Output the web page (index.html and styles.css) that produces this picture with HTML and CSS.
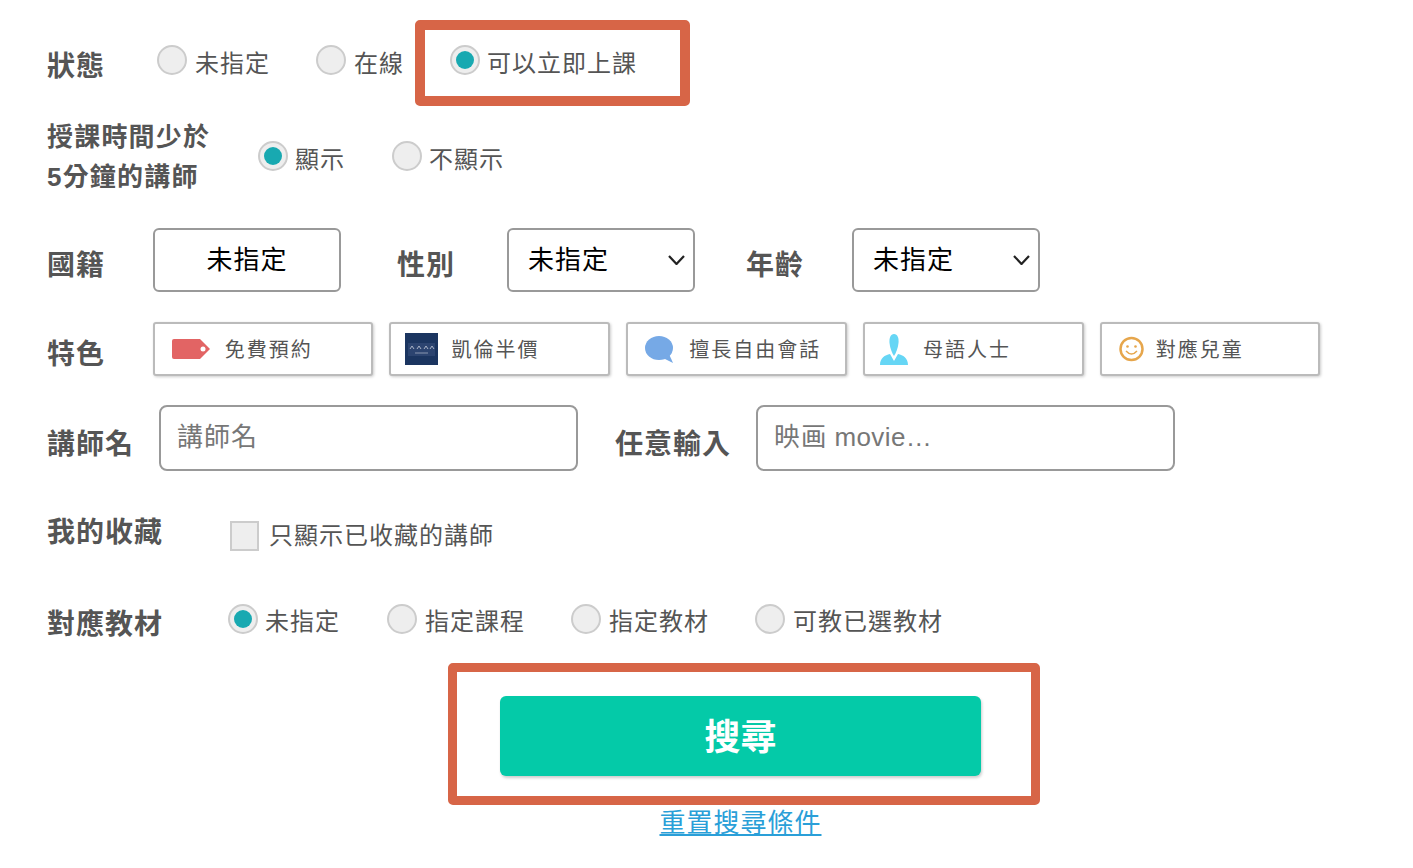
FILE: index.html
```html
<!DOCTYPE html>
<html lang="zh-Hant">
<head>
<meta charset="utf-8">
<title>搜尋</title>
<link rel="stylesheet" href="styles.css">
</head>
<body>
<form class="form">
  <div class="row row-status">
    <span class="label label-status">狀態</span>
    <div class="options">
      <span class="radio-item status-a"><i class="radio"></i>未指定</span>
      <span class="radio-item status-b"><i class="radio"></i>在線</span>
      <span class="highlight-top"><span class="radio-item"><i class="radio on"></i>可以立即上課</span></span>
    </div>
  </div>
  <div class="row row-short">
    <span class="label-small">授課時間少於<br>5分鐘的講師</span>
    <span class="radio-item short-a"><i class="radio on"></i>顯示</span>
    <span class="radio-item short-b"><i class="radio"></i>不顯示</span>
  </div>
  <div class="row row-select">
    <span class="label w-106">國籍</span>
    <div class="pick pick-center">未指定</div>
    <span class="label w-gender">性別</span>
    <div class="select-wrap">
      <select class="pick pick-select"><option>未指定</option></select>
      <svg class="chev" width="17" height="10" viewBox="0 0 17 10"><path d="M1 1L8.500 9 16 1" fill="none" stroke="#222" stroke-width="2.200"/></svg>
    </div>
    <span class="label w-age">年齡</span>
    <div class="select-wrap">
      <select class="pick pick-select"><option>未指定</option></select>
      <svg class="chev" width="17" height="10" viewBox="0 0 17 10"><path d="M1 1L8.500 9 16 1" fill="none" stroke="#222" stroke-width="2.200"/></svg>
    </div>
  </div>
  <div class="row row-feature">
    <span class="label w-feature">特色</span>
    <div class="chips">
      <div class="chip"><svg class="icon ic-tag" width="38" height="20" viewBox="0 0 38 20"><path d="M2 0H28L38 10 28 20H2Q0 20 0 18V2Q0 0 2 0Z" fill="#e26464"/><circle cx="31" cy="10" r="2.500" fill="#fff"/></svg>免費預約</div>
      <div class="chip"><svg class="icon ic-logo" width="33" height="32" viewBox="0 0 33 32"><rect width="33" height="32" fill="#1b3560"/><rect x="3" y="10" width="27" height="13" fill="#2c4470"/><path d="M5 16l2-3 2 3M12 16l2-3 2 3M19 16l2-3 2 3M25 16l2-3 2 3" stroke="#aab4c8" fill="none"/><path d="M10 20H23" stroke="#8a97b0"/></svg>凱倫半價</div>
      <div class="chip"><svg class="icon ic-bubble" width="29" height="27" viewBox="0 0 29 27"><ellipse cx="14" cy="12" rx="14" ry="12" fill="#76a9e6"/><path d="M18 22L28 27 24 18Z" fill="#76a9e6"/></svg>擅長自由會話</div>
      <div class="chip"><svg class="icon ic-person" width="28" height="31" viewBox="0 0 28 31"><path d="M14 0C17.500 0 19 4 18.500 9 18 14 16 19 14 22 12 19 10 14 9.500 9 9 4 10.500 0 14 0Z" fill="#66d6f5"/><path d="M10 20L14 27 18 20C23 21 28 24 28 31H0C0 24 5 21 10 20Z" fill="#66d6f5"/></svg>母語人士</div>
      <div class="chip"><svg class="icon ic-smile" width="25" height="26" viewBox="0 0 25 26"><circle cx="12.500" cy="13" r="11" fill="#fff" stroke="#e6a64c" stroke-width="2.500"/><circle cx="8.500" cy="10.500" r="1.300" fill="#e6a64c"/><circle cx="16.500" cy="10.500" r="1.300" fill="#e6a64c"/><path d="M7 15Q12.500 21 18 15" stroke="#e6a64c" stroke-width="1.500" fill="none"/></svg>對應兒童</div>
    </div>
  </div>
  <div class="row row-input">
    <span class="label w-112">講師名</span>
    <input class="text" placeholder="講師名">
    <span class="label w-input">任意輸入</span>
    <input class="text text-any" placeholder="映画 movie…">
  </div>
  <div class="row row-fav">
    <span class="label w-183">我的收藏</span>
    <span class="radio-item"><i class="check"></i>只顯示已收藏的講師</span>
  </div>
  <div class="row row-material">
    <span class="label w-181">對應教材</span>
    <span class="radio-item mat-a"><i class="radio on"></i>未指定</span>
    <span class="radio-item mat-b"><i class="radio"></i>指定課程</span>
    <span class="radio-item mat-b"><i class="radio"></i>指定教材</span>
    <span class="radio-item"><i class="radio"></i>可教已選教材</span>
  </div>
  <div class="submit-wrap">
    <div class="highlight-bottom"><button type="button" class="submit">搜尋</button></div>
    <a class="reset" href="#">重置搜尋條件</a>
  </div>
</form>
</body>
</html>
```
FILE: styles.css
```css
* { box-sizing: border-box; }
html, body { margin: 0; background: #fff; }
body {
  font-family: "Liberation Sans", "Noto Sans CJK TC", sans-serif;
  color: #555;
  width: 1413px;
  height: 868px;
  overflow: hidden;
}
.form { padding: 20px 0 0 47px; }
.row { display: flex; align-items: center; }
.label { font-size: 28px; font-weight: 700; letter-spacing: 1px; color: #555; white-space: nowrap; position: relative; }
.label-small { font-size: 26px; font-weight: 700; letter-spacing: 1.200px; line-height: 40px; width: 211px; position: relative; top: -3px; }
.radio-item { display: inline-flex; align-items: center; font-size: 24px; letter-spacing: 1px; line-height: 30px; white-space: nowrap; color: #555; }
.radio { width: 30px; height: 30px; border-radius: 50%; background: #eee; border: 2px solid #ccc; margin-right: 8px; position: relative; top: -3px; flex: none; }
.radio.on { margin-right: 7px; }
.radio.on::after { content: ""; position: absolute; left: 4px; top: 4px; width: 18px; height: 18px; border-radius: 50%; background: #18a9b1; }
.check { width: 29px; height: 30px; background: #eee; border: 2px solid #ccc; margin-right: 10px; flex: none; }

.row-status { height: 86px; }
.row-status .radio-item { position: relative; top: 1px; }
.row-status .radio { top: -4px; }
.label-status { width: 110px; top: 1px; }
.options { display: flex; align-items: center; }
.status-a { width: 159px; }
.status-b { width: 99px; }
.highlight-top { width: 275px; height: 86px; border: 10px solid #d76547; border-radius: 5px; display: flex; align-items: center; padding-left: 25px; }

.row-short { height: 80px; margin-top: 14px; }
.row-short .radio { top: -4px; }
.short-a { width: 134px; }
.short-b .radio { margin-right: 7px; }

.row-select { margin-top: 28px; height: 64px; }
.w-106 { width: 106px; top: 3px; }
.w-feature { width: 105.700px; top: 3px; }
.w-gender { width: 110px; margin-left: 56px; top: 3px; }
.w-age { width: 106px; margin-left: 51px; top: 3px; }
.pick {
  width: 188px; height: 64px; border: 2px solid #999; border-radius: 6px; background: #fff;
  font: 26px "Liberation Sans", "Noto Sans CJK TC", sans-serif; color: #000; letter-spacing: 1px;
}
.pick-center { display: flex; align-items: center; justify-content: center; padding: 0 0 6px; }
.select-wrap { position: relative; width: 188px; height: 64px; }
.pick-select { display: block; appearance: none; -webkit-appearance: none; padding: 0 0 0 19px; }
.chev { position: absolute; right: 10px; top: 27px; pointer-events: none; }

.row-feature { margin-top: 30px; height: 54px; }
.chips { display: flex; gap: 16px; }
.chip {
  width: 220.750px; height: 54px; border: 2px solid #bbb; border-radius: 3px; background: #fff;
  box-shadow: 1px 1px 3px rgba(0,0,0,.2); display: flex; align-items: center; padding-bottom: 2px;
  font-size: 20px; letter-spacing: 2px; color: #555; white-space: nowrap;
}
.icon { flex: none; position: relative; top: 1px; }
.ic-tag { margin: 0 15px 0 17px; }
.ic-logo { margin: 0 13px 0 14px; }
.ic-bubble { margin: 0 15px 0 17px; }
.ic-person { margin: 0 15px 0 15px; }
.ic-smile { margin: 0 12px 0 17px; }

.row-input { margin-top: 29px; height: 66px; }
.w-112 { width: 112px; top: 4px; }
.w-input { width: 141px; margin-left: 37px; top: 4px; }
.text {
  width: 419px; height: 66px; border: 2px solid #999; border-radius: 8px; background: #fff;
  font: 26px "Liberation Sans", "Noto Sans CJK TC", sans-serif; letter-spacing: 1px; padding: 0 0 2px 16px; color: #555;
}
.text-any { letter-spacing: .400px; }
.text::placeholder { color: #777; opacity: 1; }

.row-fav { margin-top: 45px; height: 40px; }
.w-183 { width: 183px; top: -6px; }

.row-material { margin-top: 46px; height: 40px; }
.w-181 { width: 181px; top: 0; }
.mat-a { width: 159px; }
.mat-b { width: 184px; }

.submit-wrap { width: 592px; margin: 21px 0 0 401px; display: flex; flex-direction: column; align-items: center; }
.highlight-bottom { width: 592px; height: 142px; border: 9px solid #d76547; border-radius: 5px; display: flex; align-items: center; justify-content: center; padding: 4px 7px 0 0; }
.submit {
  width: 481px; height: 80px; border: 0; border-radius: 6px; background: #04caa8; color: #fff; padding: 0 0 4px;
  font: 700 36px "Liberation Sans", "Noto Sans CJK TC", sans-serif; box-shadow: 1px 2px 3px rgba(0,0,0,.2);
}
.reset { font-size: 26px; letter-spacing: 1px; color: #2a9fd8; line-height: 36px; margin-right: 7px; }
```
